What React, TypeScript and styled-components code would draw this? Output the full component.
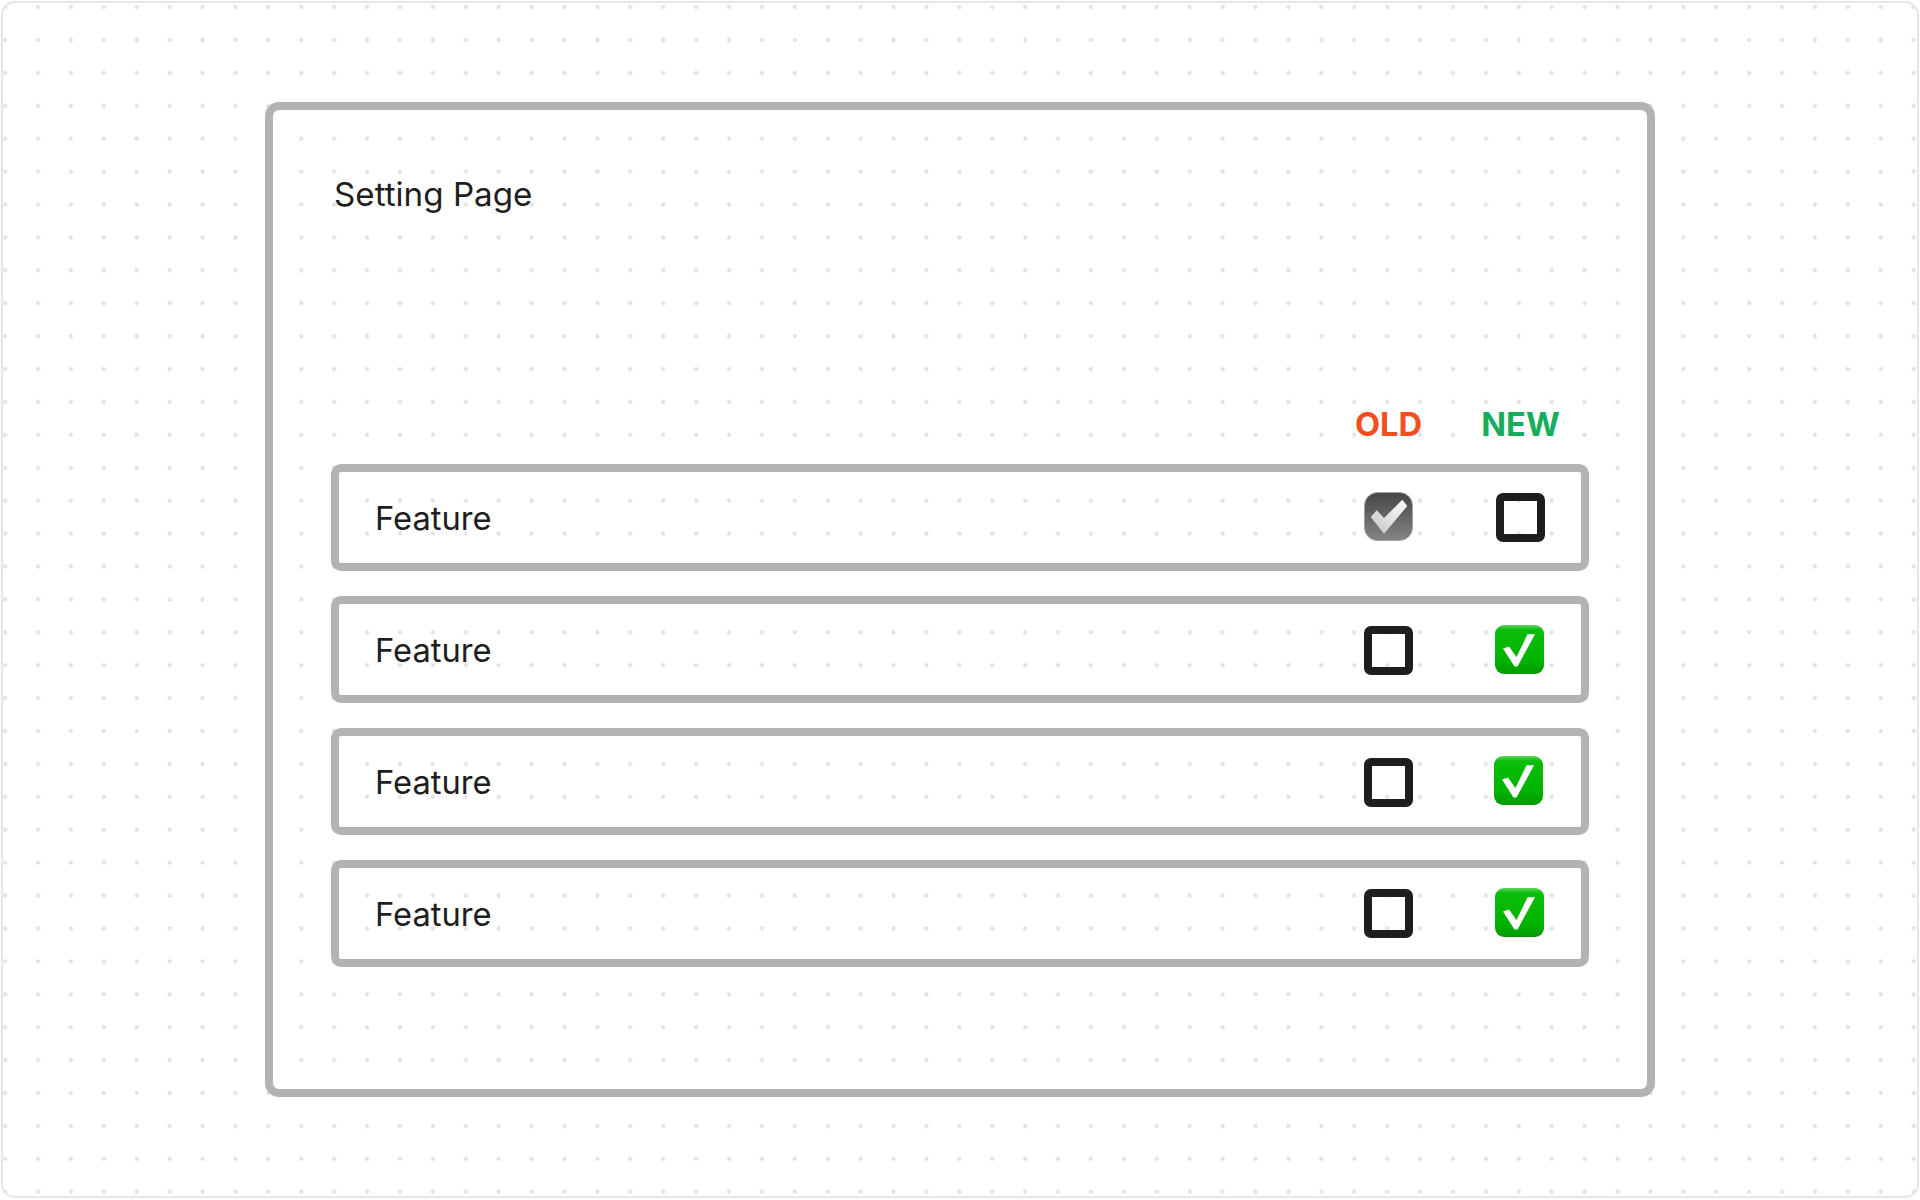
import React from 'react';
import styled, { createGlobalStyle } from 'styled-components';

const GlobalStyle = createGlobalStyle`
  html, body {
    margin: 0;
    padding: 0;
    background: #fff;
  }
  body {
    font-family: Inter, "Liberation Sans", sans-serif;
    color: #1e1e1e;
  }
`;

const Canvas = styled.div`
  box-sizing: border-box;
  width: 1918px;
  height: 1197px;
  margin: 1px;
  padding: 99px 262px;
  border: 2px solid #e6e6e6;
  border-radius: 14px;
  background-color: #fff;
  background-image: radial-gradient(circle at center, #e2e2e2 0, #e2e2e2 1.8px, rgba(226, 226, 226, 0) 2.5px);
  background-size: 32.92px 32.92px;
  background-origin: border-box;
  background-position: -12.38px -10.38px;
`;

const Panel = styled.section`
  box-sizing: border-box;
  display: flex;
  flex-direction: column;
  height: 995px;
  padding: 60px 58px 0 58px;
  border: 8px solid #b3b3b3;
  border-radius: 14px;
`;

const Title = styled.h1`
  margin: 0 0 186px 0;
  padding-left: 3px;
  height: 48px;
  font-size: 33.2px;
  font-weight: 400;
  line-height: 48px;
`;

const ColumnGrid = styled.div`
  display: grid;
  grid-template-columns: 1fr 49px 49px;
  column-gap: 83px;
  align-items: center;
`;

const HeaderRow = styled(ColumnGrid)`
  height: 40px;
  padding-right: 44px;
  margin-bottom: 20px;
`;

const ColumnLabel = styled.span<{ $tone: string }>`
  display: flex;
  justify-content: center;
  font-size: 32.6px;
  font-weight: 700;
  line-height: 40px;
  white-space: nowrap;
  color: ${p => p.$tone};
`;

const RowList = styled.div`
  display: flex;
  flex-direction: column;
  gap: 25px;
`;

const FeatureRow = styled(ColumnGrid)`
  box-sizing: border-box;
  height: 107px;
  padding: 0 36px;
  border: 8px solid #b3b3b3;
  border-radius: 10px;
`;

const FeatureName = styled.span`
  font-size: 32.7px;
  line-height: 48px;
`;

const Cell = styled.div<{ $shiftY?: number; $shiftX?: number }>`
  display: flex;
  margin-top: ${p => (p.$shiftY || 0) * 2}px;
  margin-left: ${p => p.$shiftX || 0}px;
`;

const EmptyBox = styled.div`
  box-sizing: border-box;
  width: 49px;
  height: 49px;
  border: 8px solid #1e1e1e;
  border-radius: 7px;
`;

const GrayCheck = () => (
  <svg width="49" height="49" viewBox="0 0 49 49">
    <defs>
      <linearGradient id="grayFace" x1="0" y1="0" x2="0" y2="1">
        <stop offset="0" stopColor="#464646" />
        <stop offset="1" stopColor="#858585" />
      </linearGradient>
      <linearGradient id="grayMark" x1="1" y1="0" x2="0" y2="1">
        <stop offset="0" stopColor="#ffffff" />
        <stop offset="1" stopColor="#c4c4c4" />
      </linearGradient>
    </defs>
    <rect x="0.5" y="0.5" width="48" height="48" rx="13" fill="url(#grayFace)" stroke="#a0a0a0" />
    <path d="M6.7 25 L12.7 18.3 L20 26 L38.3 7.7 L43.3 14 L20 41.7 Z" fill="url(#grayMark)" />
  </svg>
);

const GreenCheck = () => (
  <svg width="49" height="49" viewBox="0 0 49 49">
    <defs>
      <linearGradient id="greenFace" x1="0" y1="0" x2="0" y2="1">
        <stop offset="0" stopColor="#5fd45f" />
        <stop offset="0.1" stopColor="#0bbd0b" />
        <stop offset="0.7" stopColor="#00b400" />
        <stop offset="1" stopColor="#029a02" />
      </linearGradient>
    </defs>
    <rect x="0" y="0" width="49" height="49" rx="9" fill="url(#greenFace)" />
    <path d="M8 23.5 L14 21.5 L21.5 32 L32.5 9.3 L40 9.3 L22.5 41.5 L19.5 41.5 Z" fill="#fff" />
  </svg>
);

type Mark = 'empty' | 'gray' | 'green';

const rows: { old: Mark; next: Mark; oldY: number; nextY: number; nextX: number }[] = [
  { old: 'gray', next: 'empty', oldY: -1, nextY: 0, nextX: 0 },
  { old: 'empty', next: 'green', oldY: 1, nextY: 0, nextX: -1 },
  { old: 'empty', next: 'green', oldY: 1, nextY: -1, nextX: -2 },
  { old: 'empty', next: 'green', oldY: 0, nextY: -1, nextX: -1 },
];

const renderMark = (mark: Mark) => {
  if (mark === 'gray') return <GrayCheck />;
  if (mark === 'green') return <GreenCheck />;
  return <EmptyBox />;
};

const App = () => {
  return (
    <>
      <GlobalStyle />
      <Canvas>
        <Panel>
          <Title>Setting Page</Title>
          <HeaderRow>
            <span />
            <ColumnLabel $tone="#f24e1e">OLD</ColumnLabel>
            <ColumnLabel $tone="#14ae5c">NEW</ColumnLabel>
          </HeaderRow>
          <RowList>
            {rows.map((row, i) => (
              <FeatureRow key={i}>
                <FeatureName>Feature</FeatureName>
                <Cell $shiftY={row.oldY}>{renderMark(row.old)}</Cell>
                <Cell $shiftY={row.nextY} $shiftX={row.nextX}>{renderMark(row.next)}</Cell>
              </FeatureRow>
            ))}
          </RowList>
        </Panel>
      </Canvas>
    </>
  );
};

export default App;
